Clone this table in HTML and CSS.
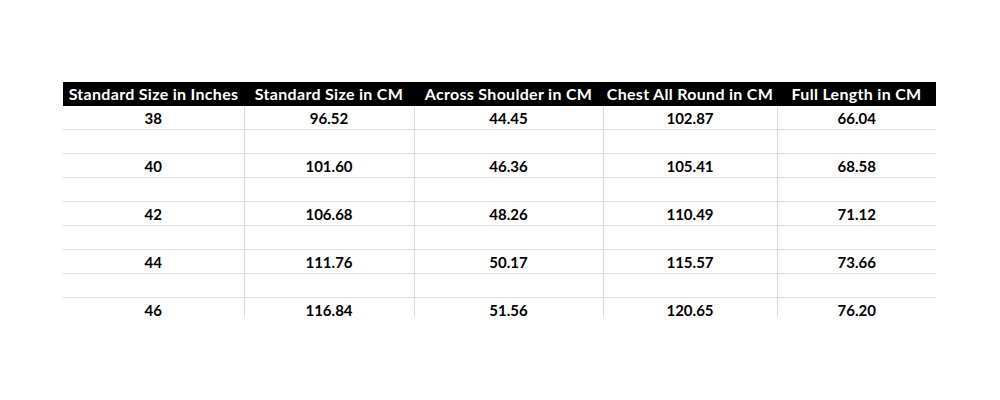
FILE: index.html
```html
<!DOCTYPE html>
<html lang="en">
<head>
<meta charset="utf-8">
<title>Size Chart</title>
<link rel="stylesheet" href="styles.css">
</head>
<body>
<div class="sheet">
  <table class="chart">
    <colgroup>
      <col class="c1"><col class="c2"><col class="c3"><col class="c4"><col class="c5">
    </colgroup>
    <thead>
      <tr>
        <th>Standard Size in Inches</th>
        <th>Standard Size in CM</th>
        <th>Across Shoulder in CM</th>
        <th>Chest All Round in CM</th>
        <th>Full Length in CM</th>
      </tr>
    </thead>
    <tbody>
      <tr><td>38</td><td>96.52</td><td>44.45</td><td>102.87</td><td>66.04</td></tr>
      <tr><td></td><td></td><td></td><td></td><td></td></tr>
      <tr><td>40</td><td>101.60</td><td>46.36</td><td>105.41</td><td>68.58</td></tr>
      <tr><td></td><td></td><td></td><td></td><td></td></tr>
      <tr><td>42</td><td>106.68</td><td>48.26</td><td>110.49</td><td>71.12</td></tr>
      <tr><td></td><td></td><td></td><td></td><td></td></tr>
      <tr><td>44</td><td>111.76</td><td>50.17</td><td>115.57</td><td>73.66</td></tr>
      <tr><td></td><td></td><td></td><td></td><td></td></tr>
      <tr><td>46</td><td>116.84</td><td>51.56</td><td>120.65</td><td>76.20</td></tr>
    </tbody>
  </table>
</div>
</body>
</html>
```
FILE: styles.css
```css
html, body {
  margin: 0;
  padding: 0;
  background: #ffffff;
}

body {
  font-family: Lato, "Liberation Sans", sans-serif;
  color: #000000;
}

.sheet {
  margin: 82px 0 0 63px;
  width: 873px;
  height: 235px;
  overflow: hidden;
}

.chart {
  width: 873px;
  border-collapse: collapse;
  table-layout: fixed;
}

.c1 { width: 181px; }
.c2 { width: 170px; }
.c3 { width: 189px; }
.c4 { width: 174px; }
.c5 { width: 159px; }

.chart th {
  background: #000000;
  color: #ffffff;
  font-weight: 700;
  font-size: 16px;
  letter-spacing: 0.3px;
  height: 24px;
  line-height: 24px;
  padding: 0;
  text-align: center;
  white-space: nowrap;
}

.chart td {
  font-weight: 700;
  font-size: 15px;
  height: 23px;
  line-height: 21px;
  padding: 0;
  vertical-align: bottom;
  text-align: center;
  border-bottom: 1px solid #d9d9d9;
  border-right: 1px solid #d9d9d9;
}

.chart td:last-child {
  border-right: none;
}
```
